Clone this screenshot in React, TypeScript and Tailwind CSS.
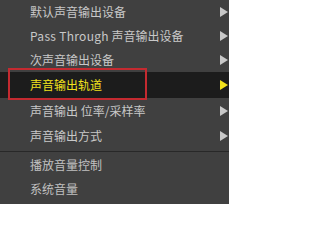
const items = [
  { label: '默认声音输出设备', h: 'h-6' },
  { label: 'Pass Through 声音输出设备', h: 'h-6', latin: 'Pass Through', rest: ' 声音输出设备' },
  { label: '次声音输出设备', h: 'h-6' },
  { label: '声音输出轨道', h: 'h-[26px]', active: true },
  { label: '声音输出 位率/采样率', h: 'h-[25px]' },
  { label: '声音输出方式', h: 'h-[25px]' },
];

const extra = ['播放音量控制', '系统音量'];

const Arrow = ({ active }: { active?: boolean }) => (
  <svg width="8" height="10" viewBox="0 0 8 10" className="ml-auto mr-[1px] shrink-0">
    <path d="M0 0 L8 5 L0 10 Z" fill={active ? '#f2e21c' : '#c8c8c8'} />
  </svg>
);

export default function App() {
  return (
    <div
      className="relative w-[229px] h-[204px] overflow-hidden bg-[#404040] text-[12px] leading-none"
      style={{ fontFamily: '"Noto Sans CJK SC", "Noto Sans", sans-serif' }}
    >
      {items.map((it) => (
        <div
          key={it.label}
          className={`flex items-center pl-[30px] ${it.h} ${
            it.active ? 'bg-[#1c1c1c] text-[#f2e21c]' : 'text-[#c8c8c8]'
          }`}
        >
          {it.latin ? (
            <span className="whitespace-nowrap">
              <span className="tracking-[0.3px]">{it.latin}</span>
              {it.rest}
            </span>
          ) : (
            <span className="whitespace-nowrap">{it.label}</span>
          )}
          <Arrow active={it.active} />
        </div>
      ))}
      <div className="mt-[3px] mb-[1px] h-px bg-[#282828]" />
      {extra.map((label) => (
        <div key={label} className="flex h-6 items-center pl-[30px] text-[#c0c0c0]">
          <span className="whitespace-nowrap">{label}</span>
        </div>
      ))}
      <div className="absolute left-[8px] top-[68px] h-[32px] w-[139px] border-2 border-[#c42a30]" />
    </div>
  );
}
